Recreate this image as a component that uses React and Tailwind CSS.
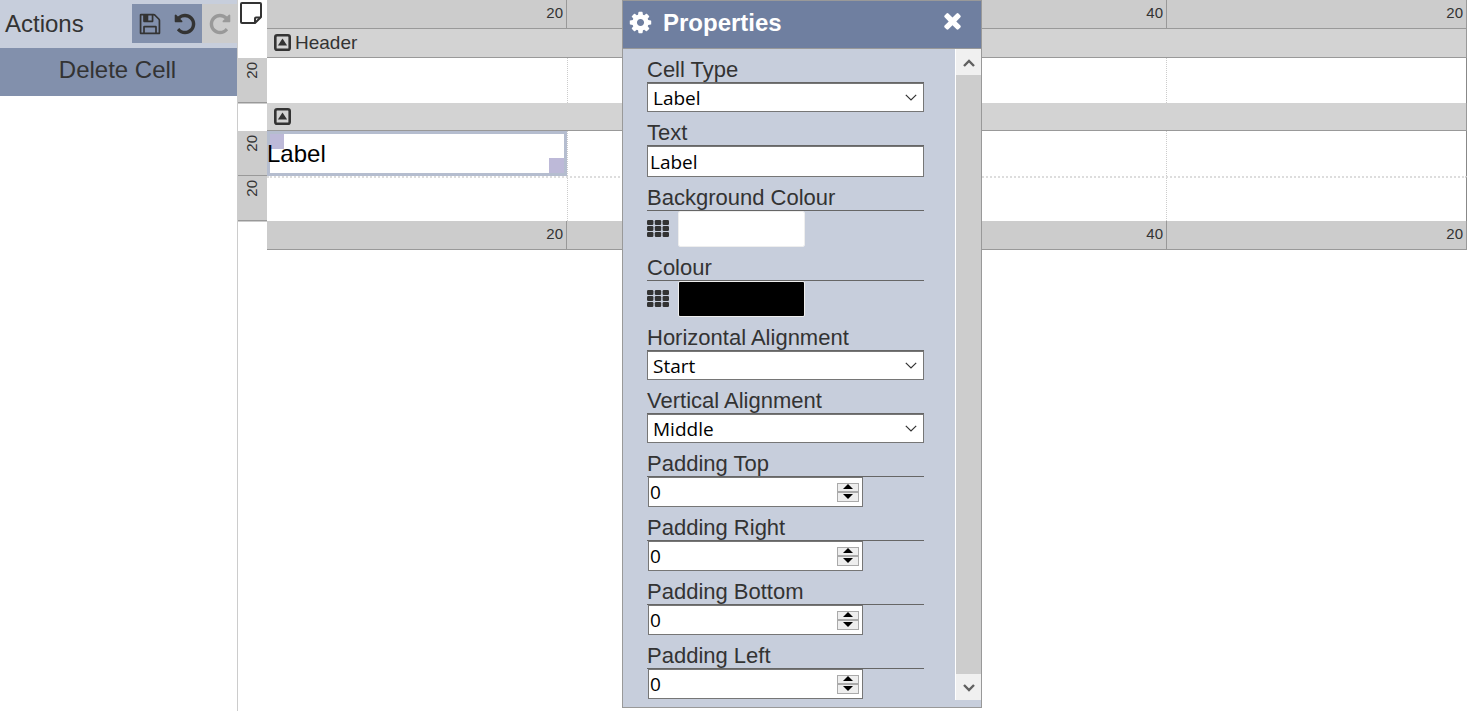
import React, { useState } from 'react';

const UNDO =
  'M1664 896q0 156-61 298t-164 245-245 164-298 61q-172 0-327-72.5t-264-204.5q-7-10-6.5-22.5t8.5-20.5l137-138q10-9 25-9 16 2 23 12 73 95 179 147t225 52q104 0 198.5-40.5t163.5-109.5 109.5-163.5 40.5-198.5-40.5-198.5-109.5-163.5-163.5-109.5-198.5-40.5q-98 0-188 35.5t-160 101.5l137 138q31 30 14 69-17 40-59 40h-448q-26 0-45-19t-19-45v-448q0-42 40-59 39-17 69 14l130 129q107-101 244.5-156.5t284.5-55.5q156 0 298 61t245 164 164 245 61 298z';
const REDO =
  'M1664 256v448q0 26-19 45t-45 19h-448q-42 0-59-40-17-39 14-69l138-138q-148-137-349-137-104 0-198.5 40.5t-163.5 109.5-109.5 163.5-40.5 198.5 40.5 198.5 109.5 163.5 163.5 109.5 198.5 40.5q119 0 225-52t179-147q7-10 23-12 15 0 25 9l137 138q9 8 9.5 20.5t-7.5 22.5q-109 132-264 204.5t-327 72.5q-156 0-298-61t-245-164-164-245-61-298 61-298 164-245 245-164 298-61q147 0 284.5 55.5t244.5 156.5l130-129q29-31 70-14 39 17 39 59z';
const SAVE =
  'M512 1536h768v-384h-768v384zm896 0h128v-896q0-14-10-38.5t-20-34.5l-281-281q-10-10-34-20t-39-10v416q0 40-28 68t-68 28h-576q-40 0-68-28t-28-68v-416h-128v1280h128v-416q0-40 28-68t68-28h832q40 0 68 28t28 68v416zm-384-928v-320q0-13-9.5-22.5t-22.5-9.5h-192q-13 0-22.5 9.5t-9.5 22.5v320q0 13 9.5 22.5t22.5 9.5h192q13 0 22.5-9.5t9.5-22.5zm640 32v928q0 40-28 68t-68 28h-1344q-40 0-68-28t-28-68v-1344q0-40 28-68t68-28h928q40 0 88 20t76 48l280 280q28 28 48 76t20 88z';
const COG =
  'M1152 896q0-106-75-181t-181-75-181 75-75 181 75 181 181 75 181-75 75-181zm512-109v222q0 12-8 23t-20 13l-185 28q-19 54-39 91 35 50 107 138 10 12 10 25t-9 23q-27 37-99 108t-94 71q-12 0-26-9l-138-108q-44 23-91 38-16 136-29 186-7 28-36 28h-222q-14 0-24.5-8.5t-11.5-21.5l-28-184q-49-16-90-37l-141 107q-10 9-25 9-14 0-25-11-126-114-165-168-7-10-7-23 0-12 8-23 15-21 51-66.5t54-70.5q-27-50-41-99l-183-27q-13-2-21-12.5t-8-23.5v-222q0-12 8-23t19-13l186-28q14-46 39-92-40-57-107-138-10-12-10-24 0-10 9-23 26-36 98.5-107.5t94.5-71.5q13 0 26 10l138 107q44-23 91-38 16-136 29-186 7-28 36-28h222q14 0 24.5 8.5t11.5 21.5l28 184q49 16 90 37l142-107q9-9 24-9 13 0 25 10 129 119 165 170 7 8 7 22 0 12-8 23-15 21-51 66.5t-54 70.5q26 50 41 98l183 28q13 2 21 12.5t8 23.5z';
const TIMES =
  'M1490 1322q0 40-28 68l-136 136q-28 28-68 28t-68-28l-294-294-294 294q-28 28-68 28t-68-28l-136-136q-28-28-28-68t28-68l294-294-294-294q-28-28-28-68t28-68l136-136q28-28 68-28t68 28l294 294 294-294q28-28 68-28t68 28l136 136q28 28 28 68t-28 68l-294 294 294 294q28 28 28 68z';

function Glyph({ d, className }) {
  return (
    <svg viewBox="0 0 1792 1792" fill="currentColor" aria-hidden="true" className={className}>
      <path d={d} />
    </svg>
  );
}

function NoteIcon() {
  return (
    <svg viewBox="0 0 22 22" className="h-[22px] w-[22px]" fill="none" stroke="#333" strokeWidth="2" strokeLinejoin="round" aria-hidden="true">
      <path d="M2 1h18a1 1 0 0 1 1 1v13l-6 6H2a1 1 0 0 1-1-1V2a1 1 0 0 1 1-1z" />
      <path d="M15 20.500v-4a1 1 0 0 1 1-1h4.500" />
    </svg>
  );
}

function CollapseIcon() {
  return (
    <svg viewBox="0 0 17 17" className="h-[17px] w-[17px]" aria-hidden="true">
      <rect x="1.300" y="1.300" width="14.400" height="14.400" rx="1.800" fill="none" stroke="#333" strokeWidth="2.600" />
      <path d="M8.500 4.600l4.600 6.800H3.900z" fill="#333" />
    </svg>
  );
}

function GridIcon() {
  return (
    <svg viewBox="0 0 22 17" className="h-[17px] w-[22px] shrink-0" fill="#333" aria-hidden="true">
      {[0, 6, 12].map((y) =>
        [0, 7.8, 15.6].map((x) => <rect key={`${x}-${y}`} x={x} y={y} width="6.400" height="5" rx="1.200" />)
      )}
    </svg>
  );
}

function Ruler() {
  return (
    <div className="grid h-[29px] grid-cols-[1fr_2fr_1fr] border-b border-[#999] bg-[#ccc] text-[15px] leading-[26px]">
      {['20', '40', '20'].map((n, i) => (
        <div key={i} className="border-r border-[#999] pr-[3px] text-right">{n}</div>
      ))}
    </div>
  );
}

function Band({ title, className }) {
  return (
    <div className={`flex items-center gap-1 border-r border-b border-[#999] bg-[#d3d3d3] pb-px pl-[7px] text-[19px] leading-6 ${className}`}>
      <button type="button" aria-label="Collapse section">
        <CollapseIcon />
      </button>
      {title && <span>{title}</span>}
    </div>
  );
}

function Row({ children, className = '' }) {
  return (
    <div className={`grid h-[45px] grid-cols-[1fr_2fr_1fr] border-r border-[#888] bg-white ${className}`}>
      <div>{children}</div>
      <div className="border-l border-dotted border-[#ccc]" />
      <div className="border-l border-dotted border-[#ccc]" />
    </div>
  );
}

function RowSize({ children }) {
  return (
    <div className="flex h-[45px] items-start justify-center border-b border-[#999] bg-[#ccc] pt-1 text-[15px]">
      <span className="rotate-180 [writing-mode:vertical-rl]">{children}</span>
    </div>
  );
}

function Field({ id, label, children }) {
  return (
    <div>
      <label htmlFor={id} className="block h-[26px] border-b border-[#666] text-[22px] leading-[25px]">{label}</label>
      {children}
    </div>
  );
}

const CONTROL = 'border border-[#767676] bg-white font-["Open_Sans","Noto_Sans",sans-serif] text-[19px] text-black';

function SelectField({ id, label, options }) {
  return (
    <Field id={id} label={label}>
      <div className="relative">
        <select id={id} className={`block h-[29px] w-full appearance-none pt-px pl-[5px] leading-[26px] ${CONTROL}`}>
          {options.map((o) => <option key={o}>{o}</option>)}
        </select>
        <svg viewBox="0 0 12 7" className="pointer-events-none absolute top-[11px] right-[7px] h-[7px] w-3" fill="none" stroke="#333" strokeWidth="1.200" aria-hidden="true">
          <path d="M.8.8L6 6 11.200.8" />
        </svg>
      </div>
    </Field>
  );
}

function ColourField({ id, label, initial }) {
  const [value, setValue] = useState(initial);
  return (
    <Field id={id} label={label}>
      <div className="flex h-9 items-center gap-[9px]">
        <button type="button" aria-label={`${label} palette`} className="pb-px">
          <GridIcon />
        </button>
        <input
          id={id}
          type="color"
          value={value}
          onChange={(e) => setValue(e.target.value)}
          className="block h-9 w-[127px] appearance-none rounded-[2px] border border-[#eee] p-0 [&::-webkit-color-swatch]:border-0 [&::-webkit-color-swatch-wrapper]:p-0"
        />
      </div>
    </Field>
  );
}

function NumberField({ id, label }) {
  const [value, setValue] = useState(0);
  return (
    <Field id={id} label={label}>
      <div className={`ml-px flex h-[30px] w-[215px] items-center pr-[3px] ${CONTROL}`}>
        <input
          id={id}
          type="number"
          value={value}
          onChange={(e) => setValue(Number(e.target.value))}
          className="h-7 min-w-0 flex-1 appearance-none pl-px leading-7 outline-none [appearance:textfield] [&::-webkit-inner-spin-button]:appearance-none"
        />
        <div className="flex w-[22px] flex-col border border-[#aaa] bg-[#eee]">
          <button type="button" aria-label={`Increase ${label}`} onClick={() => setValue(value + 1)} className="flex h-2 items-start justify-center border-b border-[#aaa]">
            <svg viewBox="0 0 10 5" className="h-[5px] w-[10px]" aria-hidden="true"><path d="M5 0l5 5H0z" /></svg>
          </button>
          <button type="button" aria-label={`Decrease ${label}`} onClick={() => setValue(value - 1)} className="flex h-[9px] items-start justify-center border-t border-[#aaa] pt-px">
            <svg viewBox="0 0 10 5" className="h-[5px] w-[10px]" aria-hidden="true"><path d="M0 0h10L5 5z" /></svg>
          </button>
        </div>
      </div>
    </Field>
  );
}

function Sidebar() {
  return (
    <aside className="w-[238px] shrink-0 border-r border-[#ccc]">
      <div className="flex h-12 items-start bg-[#c7cedc]">
        <h2 className="flex-1 pl-[5px] text-2xl leading-[48px]">Actions</h2>
        <div className="mt-1 flex h-[39px]">
          <button type="button" aria-label="Save" className="flex w-[35px] items-center justify-center bg-[#8290ac]">
            <Glyph d={SAVE} className="h-6 w-6" />
          </button>
          <button type="button" aria-label="Undo" className="flex w-[35px] items-center justify-center bg-[#8290ac]">
            <Glyph d={UNDO} className="h-6 w-6" />
          </button>
          <button type="button" aria-label="Redo" disabled className="flex w-[35px] items-center justify-center bg-[#ccc] text-[#999]">
            <Glyph d={REDO} className="h-6 w-6" />
          </button>
        </div>
      </div>
      <button type="button" className="block h-12 w-full bg-[#8290ac] pr-[2px] pb-1 text-2xl">Delete Cell</button>
    </aside>
  );
}

function ScrollArrow({ d, label }) {
  return (
    <button type="button" aria-label={label} className="flex h-[26px] items-center justify-center bg-[#f0f0f0] pt-[2px]">
      <svg viewBox="0 0 12 8" className="h-2 w-3" fill="none" stroke="#606060" strokeWidth="2.400" aria-hidden="true">
        <path d={d} />
      </svg>
    </button>
  );
}

function PropertiesDialog() {
  return (
    <section role="dialog" aria-label="Properties" className="absolute top-0 left-[622px] w-[360px] border border-[#999] bg-[#c7cedc]">
      <header className="flex h-12 items-center border-b border-[#999] bg-[#6f7fa0] pr-4 pb-1 pl-[5px] text-white">
        <Glyph d={COG} className="h-[25px] w-[25px]" />
        <h2 className="flex-1 pl-[10px] text-2xl font-bold">Properties</h2>
        <button type="button" aria-label="Close" className="pb-1">
          <Glyph d={TIMES} className="h-[25px] w-[25px]" />
        </button>
      </header>
      <div className="flex pb-[7px]">
        <form className="flex min-w-0 flex-1 flex-col gap-2 pt-2 pr-[31px] pb-px pl-6">
          <SelectField id="cell-type" label="Cell Type" options={['Label']} />
          <Field id="cell-text" label="Text">
            <input id="cell-text" type="text" defaultValue="Label" className={`block h-[31px] w-full pl-[2px] ${CONTROL}`} />
          </Field>
          <ColourField id="background" label="Background Colour" initial="#ffffff" />
          <ColourField id="colour" label="Colour" initial="#000000" />
          <SelectField id="h-align" label="Horizontal Alignment" options={['Start', 'Middle', 'End']} />
          <SelectField id="v-align" label="Vertical Alignment" options={['Middle', 'Start', 'End']} />
          <NumberField id="pad-top" label="Padding Top" />
          <NumberField id="pad-right" label="Padding Right" />
          <NumberField id="pad-bottom" label="Padding Bottom" />
          <NumberField id="pad-left" label="Padding Left" />
        </form>
        <div className="flex w-[26px] flex-col border-l border-white">
          <ScrollArrow label="Scroll up" d="M1 7l5-5 5 5" />
          <div className="flex-1 bg-[#cdcdcd]" />
          <ScrollArrow label="Scroll down" d="M1 1l5 5 5-5" />
        </div>
      </div>
    </section>
  );
}

export default function App() {
  return (
    <div className='relative flex min-h-screen bg-white font-["Liberation_Sans",Arial,sans-serif] text-[#333]'>
      <Sidebar />
      <div className="w-[29px] shrink-0">
        <button type="button" aria-label="Page" className="block h-[58px] w-full pt-[2px] pl-[2px]">
          <span className="block h-14"><NoteIcon /></span>
        </button>
        <RowSize>20</RowSize>
        <div className="h-7 border-t border-[#ccc]" />
        <RowSize>20</RowSize>
        <RowSize>20</RowSize>
        <div className="h-px bg-[#ccc]" />
      </div>
      <main className="min-w-0 flex-1 pr-[3px]">
        <Ruler />
        <Band title="Header" className="h-[29px]" />
        <Row />
        <Band className="h-7" />
        <Row>
          <div className="relative flex h-full items-center border-[3px] border-[#b5bdcf] text-2xl text-black">
            <span className="absolute top-0 left-0 h-[15px] w-[14px] bg-[#bdb9d8]" />
            <span className="absolute right-0 bottom-0 h-[15px] w-[15px] bg-[#bdb9d8]" />
            <span className="relative -ml-[3px]">Label</span>
          </div>
        </Row>
        <Row className="border-t-2 border-t-[#ddd] [border-top-style:dotted]" />
        <Ruler />
      </main>
      <PropertiesDialog />
    </div>
  );
}
